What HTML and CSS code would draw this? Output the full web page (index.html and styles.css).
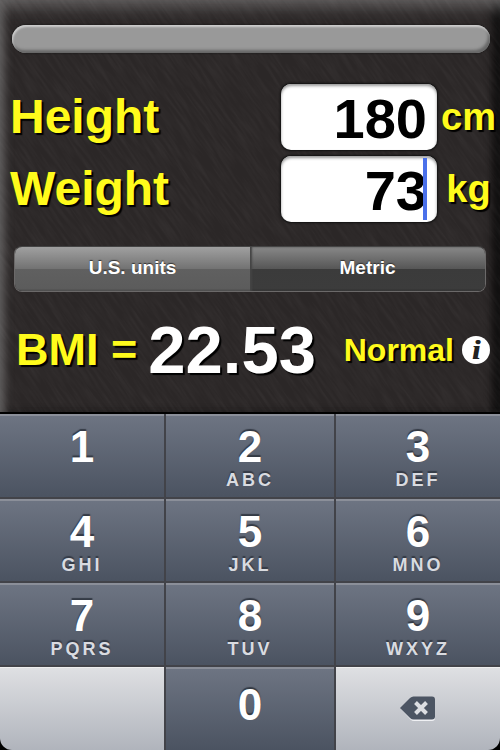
FILE: index.html
```
<!DOCTYPE html>
<html lang="en">
<head>
<meta charset="utf-8">
<meta name="viewport" content="width=device-width, initial-scale=1">
<title>BMI</title>
<link rel="stylesheet" href="styles.css">
</head>
<body>
<main class="app">
  <section class="panel">
    <svg class="texture" aria-hidden="true" preserveAspectRatio="none">
      <filter id="brushed" x="0" y="0" width="100%" height="100%">
        <feTurbulence type="fractalNoise" baseFrequency="0.03 0.35" numOctaves="3" seed="4"/>
        <feColorMatrix values="0 0 0 0 0.8  0 0 0 0 0.75  0 0 0 0 0.75  0.7 0 0 0 -0.24"/>
      </filter>
      <g transform="rotate(55)"><rect x="-100" y="-900" width="1600" height="1800" filter="url(#brushed)"/></g>
    </svg>
    <div class="meter"></div>
    <div class="fields">
      <label class="name" for="height">Height</label>
      <div class="field"><input id="height" type="text" inputmode="numeric" value="180"></div>
      <span class="unit">cm</span>
      <label class="name" for="weight">Weight</label>
      <div class="field"><input id="weight" type="text" inputmode="numeric" value="73"><span class="caret"></span></div>
      <span class="unit">kg</span>
    </div>
    <div class="segments">
      <button type="button" class="segment">U.S. units</button>
      <button type="button" class="segment segment-on" aria-pressed="true">Metric</button>
    </div>
    <div class="result">
      <span class="bmi">BMI =</span>
      <output class="value">22.53</output>
      <span class="status">Normal</span>
      <button type="button" class="info">i</button>
    </div>
  </section>
  <section class="keypad">
    <button type="button" class="key">1</button>
    <button type="button" class="key">2<span class="letters">ABC</span></button>
    <button type="button" class="key">3<span class="letters">DEF</span></button>
    <button type="button" class="key">4<span class="letters">GHI</span></button>
    <button type="button" class="key">5<span class="letters">JKL</span></button>
    <button type="button" class="key">6<span class="letters">MNO</span></button>
    <button type="button" class="key">7<span class="letters">PQRS</span></button>
    <button type="button" class="key">8<span class="letters">TUV</span></button>
    <button type="button" class="key">9<span class="letters">WXYZ</span></button>
    <div class="key key-light key-blank"></div>
    <button type="button" class="key key-zero">0</button>
    <button type="button" class="key key-light key-delete" aria-label="Delete">
      <svg width="36" height="26" viewBox="0 0 36 26" aria-hidden="true">
        <path d="M1 13 10.500 3Q12 1.500 14 1.500H32Q35 1.500 35 4.500V22Q35 25 32 25H14Q12 25 10.500 23.500Z" fill="#f0f1f4"/>
        <path d="M0 12 10 2Q11.500.5 13.500.5H32Q35 .5 35 3.500V20.500Q35 23.500 32 23.500H13.500Q11.500 23.500 10 22Z" fill="#4c5563"/>
        <path d="M15.500 6.500 26.500 17.500M26.500 6.500 15.500 17.500" stroke="#dcdee2" stroke-width="4"/>
      </svg>
    </button>
  </section>
</main>
</body>
</html>
```
FILE: styles.css
```
* {
  box-sizing: border-box;
}

body {
  margin: 0;
  background: #000;
  font-family: "Arial Rounded MT Bold", "Liberation Sans", Arial, sans-serif;
  font-weight: bold;
}

button,
input {
  margin: 0;
  padding: 0;
  border: 0;
  font: inherit;
  color: inherit;
}

.app {
  display: flex;
  flex-direction: column;
  min-height: 100vh;
}

.panel {
  position: relative;
  z-index: 0;
  flex: 1;
  padding: 25px 0 24px;
  overflow: hidden;
  background: #2b2727;
  color: #fffb1c;
  text-shadow: 2px 2px 1px #000;
  box-shadow: inset 10px 0 10px -6px #626060, inset 0 14px 16px -8px #686666, inset -8px 0 10px -2px #000;
}

.texture {
  position: absolute;
  inset: 0;
  z-index: -1;
  width: 100%;
  height: 100%;
  opacity: 0.12;
}

.meter {
  height: 28px;
  margin: 0 10px 0 12px;
  border-radius: 14px;
  background: #999;
  box-shadow: inset 1px 2px 2px #ccc, inset -2px -3px 3px #666, 0 0 2px #111;
}

.fields {
  display: grid;
  grid-template-columns: 1fr 156px 63px;
  row-gap: 6px;
  align-items: center;
  margin-top: 31px;
}

.name {
  padding-left: 10px;
  font-size: 48px;
  line-height: 60px;
}

.field {
  position: relative;
  height: 66px;
}

.field input {
  width: 100%;
  height: 100%;
  padding: 2px 10px 0;
  border-radius: 10px;
  background: #fff;
  color: #000;
  font-size: 56px;
  text-align: right;
  text-shadow: none;
  box-shadow: inset 0 2px 3px #999, 0 0 2px 1px #111;
}

.caret {
  position: absolute;
  top: 2px;
  right: 10px;
  bottom: 2px;
  width: 4px;
  background: #4a70ea;
}

.unit {
  font-size: 38px;
  line-height: 44px;
  text-align: center;
}

.segments {
  display: grid;
  grid-template-columns: 1fr 1fr;
  height: 46px;
  margin: 24px 14px 0;
  overflow: hidden;
  border: 1px solid #6b6969;
  border-top-color: #444;
  border-radius: 8px;
}

.segment {
  padding-bottom: 2px;
  background: linear-gradient(#a0a0a0, #727272 50%, #606060 50%, #5c5c5c 94%, #4c4c4c);
  color: #fff;
  font-size: 19px;
  text-shadow: 0 -1px 1px #333;
}

.segment-on {
  background: linear-gradient(#888, #565656 50%, #3b3b3b 50%, #3c3c3c 94%, #303030);
  box-shadow: inset 2px 0 2px #444;
}

.result {
  display: flex;
  align-items: center;
  height: 72px;
  margin-top: 22px;
  margin-bottom: 2px;
  padding: 0 10px 0 16px;
}

.bmi {
  font-size: 45px;
}

.value {
  margin-left: 11px;
  color: #fff;
  font-size: 67px;
  line-height: 72px;
}

.status {
  margin-left: auto;
  font-size: 32px;
}

.info {
  width: 28px;
  height: 28px;
  margin-left: 8px;
  border-radius: 50%;
  background: #fff;
  color: #222;
  font: italic bold 28px/26px "Liberation Serif", serif;
  text-shadow: 1px 0 #222;
}

.keypad {
  display: grid;
  grid-template-columns: 166fr 170fr 164fr;
  grid-template-rows: 85px 84px 84px 83px;
  overflow: hidden;
  border-top: 2px solid #000;
  border-radius: 0 0 12px 12px;
}

.key {
  display: flex;
  flex-direction: column;
  align-items: center;
  padding-top: 10px;
  border-right: 2px solid #424349;
  border-bottom: 2px solid #424349;
  background: linear-gradient(#6e7583, #4b5361);
  box-shadow: inset 0 2px 0 #8b8f99;
  color: #fff;
  font-size: 44px;
  line-height: 46px;
  text-shadow: 0 -2px 1px #343a45;
}

.key:nth-child(3n) {
  border-right: 0;
}

.key:nth-child(n + 10) {
  border-bottom: 0;
}

.letters {
  color: #d9dbe0;
  font-size: 18px;
  line-height: 20px;
  letter-spacing: 3px;
}

.key-zero {
  padding-top: 15px;
}

.key-light {
  background: linear-gradient(#dfe0e3, #b0b4bc);
  box-shadow: inset 0 1px 0 #eee;
}

.key-delete {
  justify-content: center;
  padding: 0;
}
```
